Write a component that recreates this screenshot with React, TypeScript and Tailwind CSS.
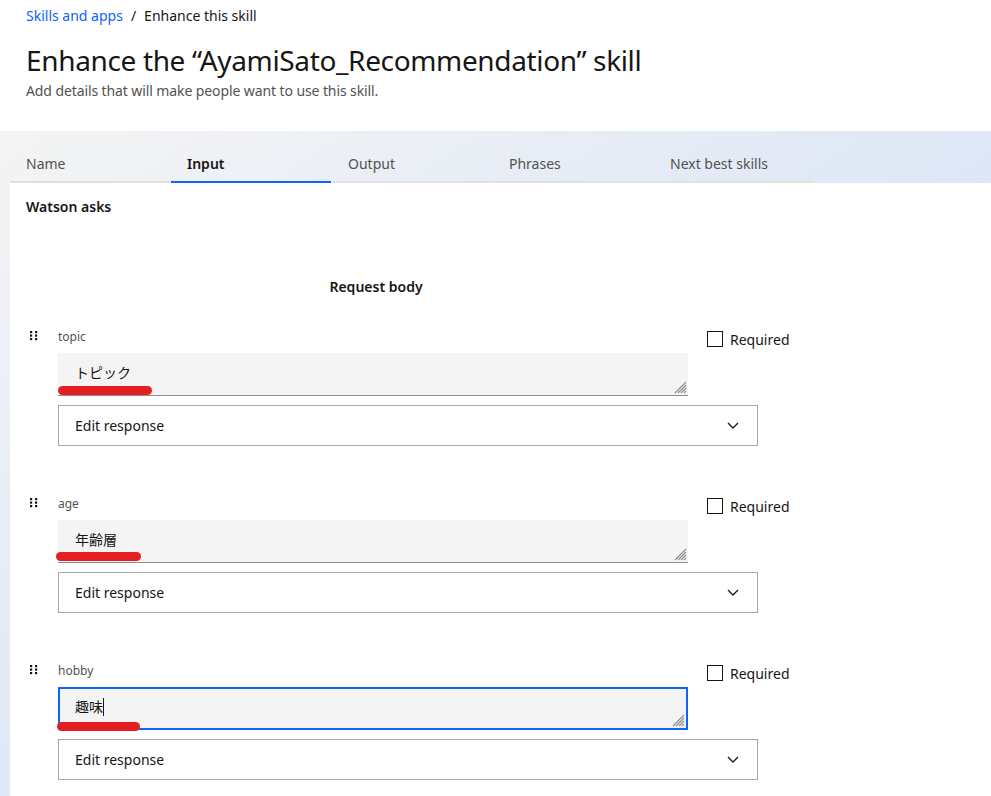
import { FC } from 'react';

const font = '[font-family:"Noto_Sans","Noto_Sans_CJK_JP",sans-serif]';

const tabs = ['Name', 'Input', 'Output', 'Phrases', 'Next best skills'];

type Param = { name: string; value: string; focused?: boolean; mark: { left: number; top: number; width: number } };

const params: Param[] = [
    { name: 'topic', value: 'トピック', mark: { left: 0, top: 33, width: 94 } },
    { name: 'age', value: '年齢層', mark: { left: -2, top: 32, width: 85 } },
    { name: 'hobby', value: '趣味', focused: true, mark: { left: -1, top: 35, width: 83 } },
];

const DragHandle: FC = () => (
    <svg width="8" height="10" viewBox="0 0 8 10" className="mt-[2px]">
        {[0, 3.5, 7].map((y) => (
            <g key={y}>
                <rect x="0" y={y} width="2.2" height="2.2" fill="#161616" />
                <rect x="5" y={y} width="2.2" height="2.2" fill="#161616" />
            </g>
        ))}
    </svg>
);

const Grip: FC = () => (
    <svg width="14" height="14" viewBox="0 0 14 14" className="absolute right-[1px] bottom-[1px]">
        <path d="M13 2 L2 13 M13 5 L5 13 M13 8 L8 13 M13 11 L11 13" stroke="#8d8d8d" strokeWidth="1.1" />
    </svg>
);

const ParamRow: FC<{ param: Param }> = ({ param }) => (
    <div className="flex mb-[50px]">
        <div className="w-[32px] shrink-0 pl-[4px]">
            <DragHandle />
        </div>
        <div className="flex flex-col w-[700px] shrink-0">
            <div className="flex">
                <div className="flex flex-col w-[630px] shrink-0">
                    <span className="text-[12px] leading-[16px] text-[#525252] mb-[8px]">{param.name}</span>
                    <div
                        className={
                            param.focused
                                ? 'relative h-[43px] bg-[#f4f4f4] border-2 border-[#0f62fe] pl-[15px] pt-[9px] text-[14px] leading-[18px] text-[#161616] flex items-start'
                                : 'relative h-[43px] bg-[#f4f4f4] border-b border-[#8d8d8d] pl-[17px] pt-[11px] text-[14px] leading-[18px] text-[#161616] flex items-start'
                        }
                    >
                        <span>{param.value}</span>
                        {param.focused && <span className="inline-block w-[1px] h-[18px] bg-[#161616]" />}
                        <span
                            className="absolute h-[9px] rounded-full bg-[#e41f1f]"
                            style={{
                                left: param.mark.left - (param.focused ? 2 : 0),
                                top: param.mark.top - (param.focused ? 2 : 0),
                                width: param.mark.width,
                            }}
                        />
                        <Grip />
                    </div>
                </div>
                <label className="flex shrink-0 items-center gap-[7px] ml-[19px] mt-[2px] h-[16px] text-[14px] text-[#161616] whitespace-nowrap">
                    <span className="w-[16px] h-[16px] border border-[#161616] bg-white" />
                    Required
                </label>
            </div>
            <div className="mt-[9px] h-[41px] border border-[#a8a8a8] flex items-center justify-between pl-[16px] pr-[18px] text-[14px] text-[#161616]">
                Edit response
                <svg width="12" height="7" viewBox="0 0 12 7">
                    <path d="M1 1 L6 6 L11 1" fill="none" stroke="#161616" strokeWidth="1.3" />
                </svg>
            </div>
        </div>
    </div>
);

export default function App() {
    return (
        <div className={`${font} w-[991px] h-[796px] overflow-hidden flex flex-col bg-white`}>
            <div className="h-[131px] shrink-0 px-[26px] pt-[7px] flex flex-col">
                <div className="flex items-center gap-[8px] text-[14px] leading-[18px]">
                    <span className="text-[#0f62fe]">Skills and apps</span>
                    <span className="text-[#161616]">/</span>
                    <span className="text-[#161616]">Enhance this skill</span>
                </div>
                <h1 className="mt-[17px] text-[28px] leading-[36px] tracking-[-0.35px] text-[#161616]">
                    Enhance the “AyamiSato_Recommendation” skill
                </h1>
                <p className="mt-[4px] text-[14px] leading-[18px] tracking-[-0.1px] text-[#525252]">
                    Add details that will make people want to use this skill.
                </p>
            </div>
            <div className="flex-1 flex flex-col pl-[10px] bg-linear-to-br from-[#f4f4f4] to-[#cadbf8]">
                <div className="flex shrink-0 pt-[12px] gap-[1px]">
                    {tabs.map((t) => (
                        <div
                            key={t}
                            className={
                                t === 'Input'
                                    ? 'w-[160px] h-[40px] pl-[16px] pt-[12px] border-b-2 border-[#0f62fe] text-[14px] leading-[18px] font-semibold text-[#161616]'
                                    : 'w-[160px] h-[40px] pl-[16px] pt-[12px] border-b-2 border-[#e0e0e0] text-[14px] leading-[18px] text-[#525252]'
                            }
                        >
                            {t}
                        </div>
                    ))}
                </div>
                <div className="flex-1 bg-white pl-[16px] pt-[16px]">
                    <h3 className="text-[14px] leading-[16px] font-semibold text-[#161616]">Watson asks</h3>
                    <h4 className="mt-[64px] w-[700px] text-center text-[14px] leading-[16px] font-semibold text-[#161616]">
                        Request body
                    </h4>
                    <div className="mt-[34px] flex flex-col">
                        {params.map((p) => (
                            <ParamRow key={p.name} param={p} />
                        ))}
                    </div>
                </div>
            </div>
        </div>
    );
}
